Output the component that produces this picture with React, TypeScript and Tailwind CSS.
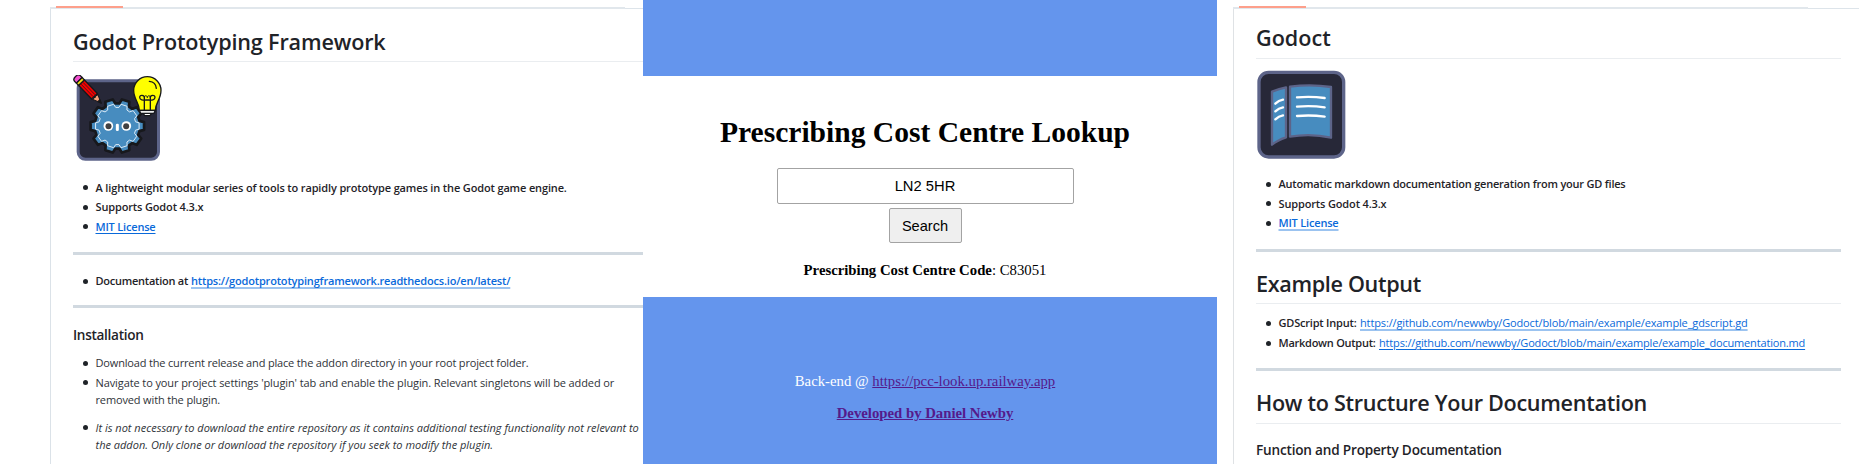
import type { ReactNode } from "react";

function gearPath(cx: number, cy: number, tip: number, root: number) {
  const teeth = 10;
  const step = (Math.PI * 2) / teeth;
  const points: string[] = [];
  for (let i = 0; i < teeth; i++) {
    const a = i * step;
    const corners: [number, number][] = [
      [root, a - step * 0.36],
      [tip, a - step * 0.23],
      [tip, a + step * 0.23],
      [root, a + step * 0.36],
    ];
    for (const [r, t] of corners) {
      points.push(`${(cx + r * Math.cos(t)).toFixed(1)} ${(cy + r * Math.sin(t)).toFixed(1)}`);
    }
  }
  return `M${points.join("L")}Z`;
}

function PrototypingLogo() {
  return (
    <svg className="block h-[90px] w-[90px]" viewBox="9 15 270 270">
      <rect x="24.5" y="32" width="241" height="236" rx="22" fill="#272838" stroke="#5d6489" strokeWidth="9" />
      <path d={gearPath(142, 168, 81, 68)} fill="#478cbf" stroke="#17181c" strokeWidth="8" strokeLinejoin="round" />
      <path d={gearPath(142, 168, 66, 56)} fill="none" stroke="#dcebf7" strokeWidth="3" strokeLinejoin="round" />
      <circle cx="115" cy="168" r="14.5" fill="#fff" />
      <circle cx="169" cy="168" r="14.5" fill="#fff" />
      <circle cx="115.5" cy="168.5" r="9" fill="#414042" />
      <circle cx="168.5" cy="168.5" r="9" fill="#414042" />
      <rect x="137.5" y="161" width="9" height="22" rx="4" fill="#fff" />
      <g transform="translate(18 21) rotate(46)" stroke="#17181c" strokeWidth="4" strokeLinejoin="round">
        <path d="M14 -12H6a8 12 0 0 0 0 24H14Z" fill="#f24fd0" />
        <path d="M14 -12H24V12H14Z" fill="#f7e017" />
        <path d="M24 -12H80V12H24Z" fill="#f50000" />
        <path d="M26 -4H78M26 4H78" strokeWidth="2" />
        <path d="M80 -12L108 0L80 12Q86 6 81 4Q86 0 81 -4Q86 -7 80 -12Z" fill="#f7a07a" strokeWidth="3" />
        <path d="M99 -4L109 0L99 4Z" fill="#17181c" />
      </g>
      <g stroke="#17181c" strokeWidth="4" strokeLinejoin="round" strokeLinecap="round">
        <path d="M218 128L224 137H240L246 128Z" fill="#fff" />
        <path d="M208 121C208 99 191 88 191 61a41 41 0 0 1 82 0C273 88 256 99 256 121Z" fill="#ffff00" />
        <path d="M208 121H256L252 130H212Z" fill="#eee" />
        <path d="M223 120V82C223 75 209 73 209 82C209 92 223 90 232 90C241 90 255 92 255 82C255 73 241 75 241 82V120" fill="none" />
        <path d="M223 83C223 74 232 76 232 83C232 76 241 74 241 83" fill="none" strokeWidth="3" />
        <path d="M238 34C251 35 258 43 259 55" fill="none" />
      </g>
    </svg>
  );
}

function GodoctLogo() {
  return (
    <svg className="block h-[89px] w-[89px]" viewBox="21 18 267 267">
      <rect x="27" y="25" width="254" height="254" rx="29" fill="#272838" stroke="#5d6489" strokeWidth="10" />
      <g fill="#478cbf" stroke="#5d6489" strokeWidth="7" strokeLinejoin="round">
        <path d="M120 68Q182 60 243 69V221Q182 207 120 218Z" />
        <path d="M66 83Q88 74 108 70V220Q82 229 66 242Z" />
      </g>
      <g fill="none" stroke="#fff" strokeWidth="7" strokeLinecap="round">
        <path d="M141 100Q183 96 224 102" />
        <path d="M141 128Q183 124 224 130" />
        <path d="M141 156Q183 152 224 158" />
        <path d="M76 119Q86 109 99 107" />
        <path d="M76 142Q86 132 99 130" />
        <path d="M76 166Q86 156 99 154" />
      </g>
    </svg>
  );
}

function Item({ className = "", children }: { className?: string; children: ReactNode }) {
  return (
    <li className={`flex h-[17px] gap-[8px] leading-[17px] whitespace-pre ${className}`}>
      <span className="mt-[6.5px] ml-[9.5px] size-[5px] shrink-0 rounded-full bg-[#1f2328]" />
      <span>{children}</span>
    </li>
  );
}

const link = "text-[#0969da] underline decoration-1 underline-offset-[2px]";
const softLink = "text-[#0969da] underline decoration-[#9bc3f0] decoration-2 underline-offset-[1.5px]";
const title = "h-[30px] text-[21.6px] leading-[30px] font-semibold whitespace-nowrap";

function FrameworkReadme() {
  return (
    <section className="flex h-full w-[642.5px] shrink-0 flex-col overflow-hidden pl-[50px]">
      <div className="relative h-[9px] shrink-0">
        <div className="absolute top-[7px] left-0 h-[2px] w-[575px] bg-[#e1e7ec]" />
        <div className="absolute top-[8px] left-[575px] h-px w-[18px] bg-[#dde4ea]" />
        <div className="absolute top-[6px] left-[6px] h-[2px] w-[67px] bg-[#fd9f8b]" />
      </div>
      <div className="flex-1 border-l border-[#dbe2e8] pl-[22px]">
        <h1 className={`mt-[18px] tracking-[-0.16px] ${title}`}>Godot Prototyping Framework</h1>
        <div className="mt-[4px] h-px bg-[#eaedf0]" />
        <div className="mt-[13px]">
          <PrototypingLogo />
        </div>
        <ul className="mt-[13.6px] flex flex-col gap-[2.7px] font-semibold">
          <Item className="tracking-[-0.14px]">
            A lightweight modular series of tools to rapidly prototype games in the Godot game engine.
          </Item>
          <Item className="tracking-[-0.145px]">Supports Godot 4.3.x</Item>
          <Item className="tracking-[-0.19px]">
            <a className={link}>MIT License</a>
          </Item>
        </ul>
        <div className="mt-[17px] h-[3px] bg-[#d1d9e0]" />
        <ul className="mt-[17.3px] font-semibold">
          <Item className="tracking-[-0.177px]">
            <span className="inline-block w-[95.5px] tracking-[-0.25px]">Documentation at</span>
            <a className={softLink}>https://godotprototypingframework.readthedocs.io/en/latest/</a>
          </Item>
        </ul>
        <div className="mt-[16.2px] h-[3px] bg-[#d1d9e0]" />
        <h3 className="mt-[16.5px] h-[20px] text-[13.6px] leading-[20px] font-semibold tracking-[-0.31px]">
          Installation
        </h3>
        <ul className="mt-[9.3px] text-[#2f3338]">
          <Item className="tracking-[-0.165px]">
            Download the current release and place the addon directory in your root project folder.
          </Item>
          <Item className="mt-[2.7px] tracking-[-0.1px]">
            Navigate to your project settings 'plugin' tab and enable the plugin. Relevant singletons will be added or
            <br />
            <span className="tracking-[-0.14px]">removed with the plugin.</span>
          </Item>
          <Item className="mt-[28px] italic">
            It is not necessary to download the entire repository as it contains additional testing functionality not
            {" relevant to"}
            <br />
            the addon. Only clone or download the repository if you seek to modify the plugin.
          </Item>
        </ul>
      </div>
    </section>
  );
}

function CostCentreLookup() {
  return (
    <section className="flex h-full w-[574px] shrink-0 flex-col bg-[#6495ed] font-['Liberation_Serif',serif] text-[14.75px] leading-[18px] text-black">
      <div className="mt-[76px] flex h-[221px] flex-col items-center bg-white pr-[9px]">
        <h1 className="mt-[38px] h-[36px] text-[29.55px] leading-[36px] font-bold whitespace-nowrap">
          Prescribing Cost Centre Lookup
        </h1>
        <input
          className="mt-[18px] h-[36px] w-[297px] rounded-[2px] border border-[#a3a3a3] bg-white text-center font-['Liberation_Sans',sans-serif] text-[14.75px]"
          defaultValue="LN2 5HR"
        />
        <button className="mt-[4px] h-[35px] w-[73px] rounded-[2px] border border-[#a3a3a3] bg-[#efefef] font-['Liberation_Sans',sans-serif] text-[14.6px]">
          Search
        </button>
        <p className="mt-[18px]">
          <b>Prescribing Cost Centre Code</b>: C83051
        </p>
      </div>
      <div className="mt-[75px] flex flex-col items-center gap-[14px] pr-[9px]">
        <p className="text-white">
          Back-end @ <a className="text-[#551a8b] underline">https://pcc-look.up.railway.app</a>
        </p>
        <a className="font-bold text-[#551a8b] underline">Developed by Daniel Newby</a>
      </div>
    </section>
  );
}

function GodoctReadme() {
  return (
    <section className="flex h-full flex-1 flex-col overflow-hidden pl-[16.5px]">
      <div className="relative h-[9px] shrink-0">
        <div className="absolute top-[7px] left-0 h-[2px] w-[575px] bg-[#e1e7ec]" />
        <div className="absolute top-[8px] right-0 h-px w-[51px] bg-[#dde4ea]" />
        <div className="absolute top-[6px] left-[6px] h-[2px] w-[67px] bg-[#fd9f8b]" />
      </div>
      <div className="flex-1 border-l border-[#dfe2e5] pr-[18.5px] pl-[22px]">
        <h1 className={`mt-[14px] ${title}`}>Godoct</h1>
        <div className="mt-[5px] h-px bg-[#eaedf0]" />
        <div className="mt-[11px] ml-px">
          <GodoctLogo />
        </div>
        <ul className="mt-[16px] flex flex-col gap-[2.7px] font-semibold">
          <Item className="tracking-[-0.215px]">Automatic markdown documentation generation from your GD files</Item>
          <Item className="tracking-[-0.145px]">Supports Godot 4.3.x</Item>
          <Item className="tracking-[-0.19px]">
            <a className={softLink}>MIT License</a>
          </Item>
        </ul>
        <div className="mt-[17.6px] h-[3px] bg-[#d1d9e0]" />
        <h1 className={`mt-[17px] tracking-[-0.33px] ${title}`}>Example Output</h1>
        <div className="mt-[4px] h-px bg-[#eaedf0]" />
        <ul className="mt-[10.5px] flex flex-col gap-[2.6px]">
          <Item className="tracking-[-0.134px]">
            <span className="inline-block w-[81.5px] font-semibold tracking-[-0.2px]">GDScript Input:</span>
            <a className={softLink}>https://github.com/newwby/Godoct/blob/main/example/example_gdscript.gd</a>
          </Item>
          <Item className="tracking-[-0.167px]">
            <span className="inline-block w-[100.5px] font-semibold tracking-[-0.256px]">Markdown Output:</span>
            <a className={link}>https://github.com/newwby/Godoct/blob/main/example/example_documentation.md</a>
          </Item>
        </ul>
        <div className="mt-[16.9px] h-[3px] bg-[#d1d9e0]" />
        <h1 className={`mt-[17px] tracking-[-0.29px] ${title}`}>How to Structure Your Documentation</h1>
        <div className="mt-[5px] h-px bg-[#eaedf0]" />
        <h3 className="mt-[16.5px] h-[20px] text-[13.6px] leading-[20px] font-semibold tracking-[-0.2px]">
          Function and Property Documentation
        </h3>
      </div>
    </section>
  );
}

export default function App() {
  return (
    <main className="flex h-[464px] w-[1859px] overflow-hidden bg-white font-['Open_Sans','Noto_Sans',sans-serif] text-[11px] text-[#1f2328]">
      <FrameworkReadme />
      <CostCentreLookup />
      <GodoctReadme />
    </main>
  );
}
